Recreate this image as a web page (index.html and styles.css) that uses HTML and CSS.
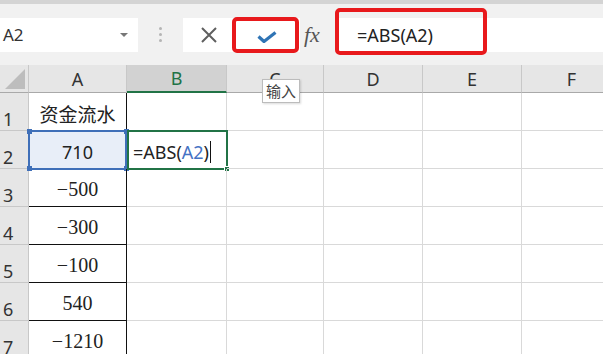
FILE: index.html
```html
<!DOCTYPE html>
<html lang="zh-CN">
<head>
  <meta charset="UTF-8">
  <title>ABS</title>
  <link rel="stylesheet" href="styles.css">
</head>
<body>
  <div class="app">
    <div class="topband"></div>
    <div class="fbar">
      <div class="namebox">
        <span>A2</span>
        <span class="caret"></span>
      </div>
      <div class="dots"><i></i><i></i><i></i></div>
      <div class="btnbox">
        <span class="btn-x">
          <svg width="16" height="16" viewBox="0 0 16 16"><path d="M1 1 L15 15 M15 1 L1 15" stroke="#5f5f5f" stroke-width="2" fill="none"/></svg>
        </span>
        <span class="btn-ok">
          <svg width="20" height="12" viewBox="0 0 20 12"><path d="M1.5 5.5 L7 10.5 L18.5 1.5" stroke="#2f74b5" stroke-width="3.2" fill="none" stroke-linejoin="round"/></svg>
        </span>
      </div>
      <div class="fx">fx</div>
      <div class="formula">=ABS(A2)</div>
      <div class="mark mark-ok"></div>
      <div class="mark mark-formula"></div>
    </div>

    <div class="sheet">
      <div class="hd corner"><span class="tri"></span></div>
      <div class="hd">A</div>
      <div class="hd active">B</div>
      <div class="hd">C</div>
      <div class="hd">D</div>
      <div class="hd">E</div>
      <div class="hd">F</div>

      <div class="rn">1</div>
      <div class="c ca cjk">资金流水</div>
      <div class="c"></div><div class="c"></div><div class="c"></div><div class="c"></div><div class="c"></div>

      <div class="rn">2</div>
      <div class="c ca num ref">710<i class="h tl"></i><i class="h tr"></i><i class="h bl"></i><i class="h br"></i></div>
      <div class="c edit">=ABS(<span class="blue">A2</span>)<span class="cursor"></span><i class="fill"></i></div>
      <div class="c"></div><div class="c"></div><div class="c"></div><div class="c"></div>

      <div class="rn">3</div>
      <div class="c ca num">−500</div>
      <div class="c"></div><div class="c"></div><div class="c"></div><div class="c"></div><div class="c"></div>

      <div class="rn">4</div>
      <div class="c ca num">−300</div>
      <div class="c"></div><div class="c"></div><div class="c"></div><div class="c"></div><div class="c"></div>

      <div class="rn">5</div>
      <div class="c ca num">−100</div>
      <div class="c"></div><div class="c"></div><div class="c"></div><div class="c"></div><div class="c"></div>

      <div class="rn">6</div>
      <div class="c ca num">540</div>
      <div class="c"></div><div class="c"></div><div class="c"></div><div class="c"></div><div class="c"></div>

      <div class="rn">7</div>
      <div class="c ca num">−1210</div>
      <div class="c"></div><div class="c"></div><div class="c"></div><div class="c"></div><div class="c"></div>

      <div class="tip">输入</div>
    </div>
  </div>
</body>
</html>
```

FILE: styles.css
```css
:root {
  --grid: #d9d9d9;
  --head: #e6e6e6;
  --green: #217346;
  --blue: #4472c4;
  --red: #e8191c;
}
* {
  box-sizing: border-box;
  margin: 0;
  padding: 0;
}
body {
  font-family: "Noto Sans", "Noto Sans CJK SC", sans-serif;
  background: #fff;
  color: #222;
  overflow: hidden;
}
.app {
  width: 603px;
  height: 354px;
  overflow: hidden;
}
.topband {
  height: 4px;
  background: #d4d4d4;
}
.fbar {
  position: relative;
  height: 61px;
  background: #f1f1f1;
  display: flex;
  align-items: center;
}
.namebox {
  width: 138px;
  height: 34px;
  background: #fff;
  display: flex;
  align-items: center;
  justify-content: space-between;
  padding: 0 10px 0 3px;
  font-size: 17px;
  color: #333;
}
.caret {
  width: 0;
  height: 0;
  border-left: 4px solid transparent;
  border-right: 4px solid transparent;
  border-top: 4px solid #777;
}
.dots {
  width: 45px;
  display: flex;
  flex-direction: column;
  align-items: center;
  gap: 3px;
}
.dots i {
  width: 3px;
  height: 3px;
  border-radius: 50%;
  background: #b5b5b5;
}
.btnbox {
  width: 117px;
  height: 34px;
  background: #fff;
  display: flex;
  align-items: center;
}
.btn-x {
  width: 50px;
  display: flex;
  justify-content: center;
  padding-left: 2px;
}
.btn-ok {
  width: 67px;
  display: flex;
  justify-content: center;
  padding-top: 4px;
}
.fx {
  width: 38px;
  padding-left: 4px;
  font-family: "Liberation Serif", serif;
  font-style: italic;
  font-size: 22px;
  color: #555;
}
.formula {
  flex: 1;
  height: 34px;
  background: #fff;
  padding-left: 19px;
  font-size: 18px;
  line-height: 34px;
  color: #222;
}
.mark {
  position: absolute;
  border: 4px solid var(--red);
  border-radius: 5px;
}
.mark-ok {
  left: 232px;
  top: 13px;
  width: 67px;
  height: 36px;
}
.mark-formula {
  left: 335px;
  top: 4px;
  width: 152px;
  height: 47px;
}
.sheet {
  position: relative;
  display: grid;
  grid-template-columns: 29px 98px 100px 97px 99px 99px 100px;
  grid-template-rows: 28px repeat(7, 38px);
  font-size: 18px;
}
.hd {
  background: var(--head);
  border-right: 1px solid #c8c8c8;
  border-bottom: 1px solid #a9a9a9;
  display: flex;
  align-items: flex-end;
  justify-content: center;
  padding-bottom: 1px;
  color: #333;
}
.hd.active {
  background: #d2d2d2;
  border-bottom: 2px solid var(--green);
  color: var(--green);
}
.corner {
  position: relative;
}
.tri {
  position: absolute;
  right: 3px;
  bottom: 3px;
  width: 0;
  height: 0;
  border-left: 20px solid transparent;
  border-bottom: 20px solid #bdbdbd;
}
.rn {
  background: var(--head);
  border-right: 1px solid #c8c8c8;
  border-bottom: 1px solid #c8c8c8;
  display: flex;
  align-items: flex-end;
  padding: 0 0 0 3px;
  color: #333;
  font-size: 18px;
  line-height: 22px;
}
.c {
  position: relative;
  border-right: 1px solid var(--grid);
  border-bottom: 1px solid var(--grid);
  display: flex;
  align-items: center;
}
.ca {
  justify-content: center;
  border-right: 1px solid #111;
  border-bottom: 1px solid #111;
}
.cjk {
  font-family: "Noto Sans CJK SC", sans-serif;
  font-size: 19px;
  padding-top: 4px;
}
.num {
  font-family: "Liberation Serif", serif;
  font-size: 20px;
  padding-top: 4px;
}
.ref {
  background: #e8eef8;
  border: 2px solid #3f6fb8;
  margin: -1px 0 -1px -1px;
  font-family: "Noto Sans", sans-serif;
  font-size: 18px;
}
.h {
  position: absolute;
  width: 5px;
  height: 5px;
  background: #3f6fb8;
}
.tl { left: -3px; top: -3px; }
.tr { right: -4px; top: -3px; }
.bl { left: -3px; bottom: -3px; }
.br { right: -4px; bottom: -3px; }
.edit {
  border: 2px solid var(--green);
  margin: -1px -1px -1px 0;
  padding: 3px 0 0 4px;
  font-size: 18px;
  color: #222;
}
.blue {
  color: var(--blue);
}
.cursor {
  width: 1px;
  height: 22px;
  background: #111;
  margin-left: 1px;
}
.fill {
  position: absolute;
  right: -4px;
  bottom: -4px;
  width: 6px;
  height: 6px;
  background: var(--green);
  border: 1px solid #fff;
}
.tip {
  position: absolute;
  left: 262px;
  top: 14px;
  width: 38px;
  height: 24px;
  background: #fff;
  border: 1px solid #bcbcbc;
  box-shadow: 1px 1px 2px rgba(0, 0, 0, 0.15);
  font-family: "Noto Sans CJK SC", sans-serif;
  font-size: 15px;
  line-height: 22px;
  text-align: center;
  color: #444;
}
```
